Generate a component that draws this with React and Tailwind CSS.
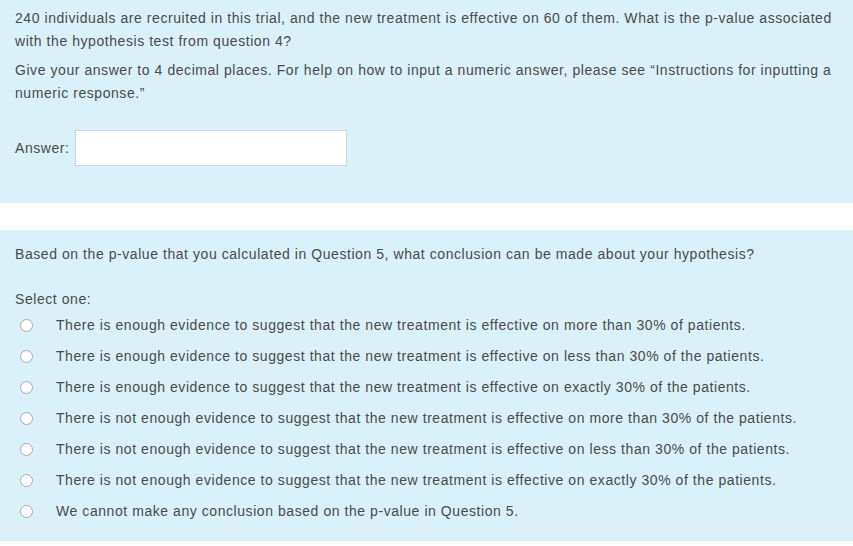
export default function App() {
  const options = [
    "There is enough evidence to suggest that the new treatment is effective on more than 30% of patients.",
    "There is enough evidence to suggest that the new treatment is effective on less than 30% of the patients.",
    "There is enough evidence to suggest that the new treatment is effective on exactly 30% of the patients.",
    "There is not enough evidence to suggest that the new treatment is effective on more than 30% of the patients.",
    "There is not enough evidence to suggest that the new treatment is effective on less than 30% of the patients.",
    "There is not enough evidence to suggest that the new treatment is effective on exactly 30% of the patients.",
    "We cannot make any conclusion based on the p-value in Question 5.",
  ];
  return (
    <div
      className="w-[853px] h-[546px] bg-white text-[#4a4a4a] text-[14px] leading-[22.5px] tracking-[0.56px] overflow-hidden"
      style={{ fontFamily: '"Liberation Sans", Arial, sans-serif' }}
    >
      <div className="bg-[#daf1f9] h-[203px] px-[15px] pt-[7px]">
        <p>
          240 individuals are recruited in this trial, and the new treatment is effective on 60 of them. What is the p-value associated with the hypothesis test from question 4?
        </p>
        <p className="mt-[7px]">
          Give your answer to 4 decimal places. For help on how to input a numeric answer, please see “Instructions for inputting a numeric response.”
        </p>
        <div className="flex items-center mt-[26px] gap-[5px]">
          <span>Answer:</span>
          <div className="w-[272px] h-[36px] bg-white border border-[#ccd6df]" />
        </div>
      </div>
      <div className="bg-[#daf1f9] mt-[27px] h-[311px] px-[15px] pt-[13px]">
        <p>Based on the p-value that you calculated in Question 5, what conclusion can be made about your hypothesis?</p>
        <p className="mt-[22px]">Select one:</p>
        <div className="flex flex-col">
          {options.map((o, i) => (
            <div key={i} className="flex items-center h-[31px]">
              <span className="ml-[5px] w-[13px] h-[13px] rounded-full bg-white border border-[#a9a9a9] shrink-0" />
              <span className="ml-[23px]">{o}</span>
            </div>
          ))}
        </div>
      </div>
    </div>
  );
}
